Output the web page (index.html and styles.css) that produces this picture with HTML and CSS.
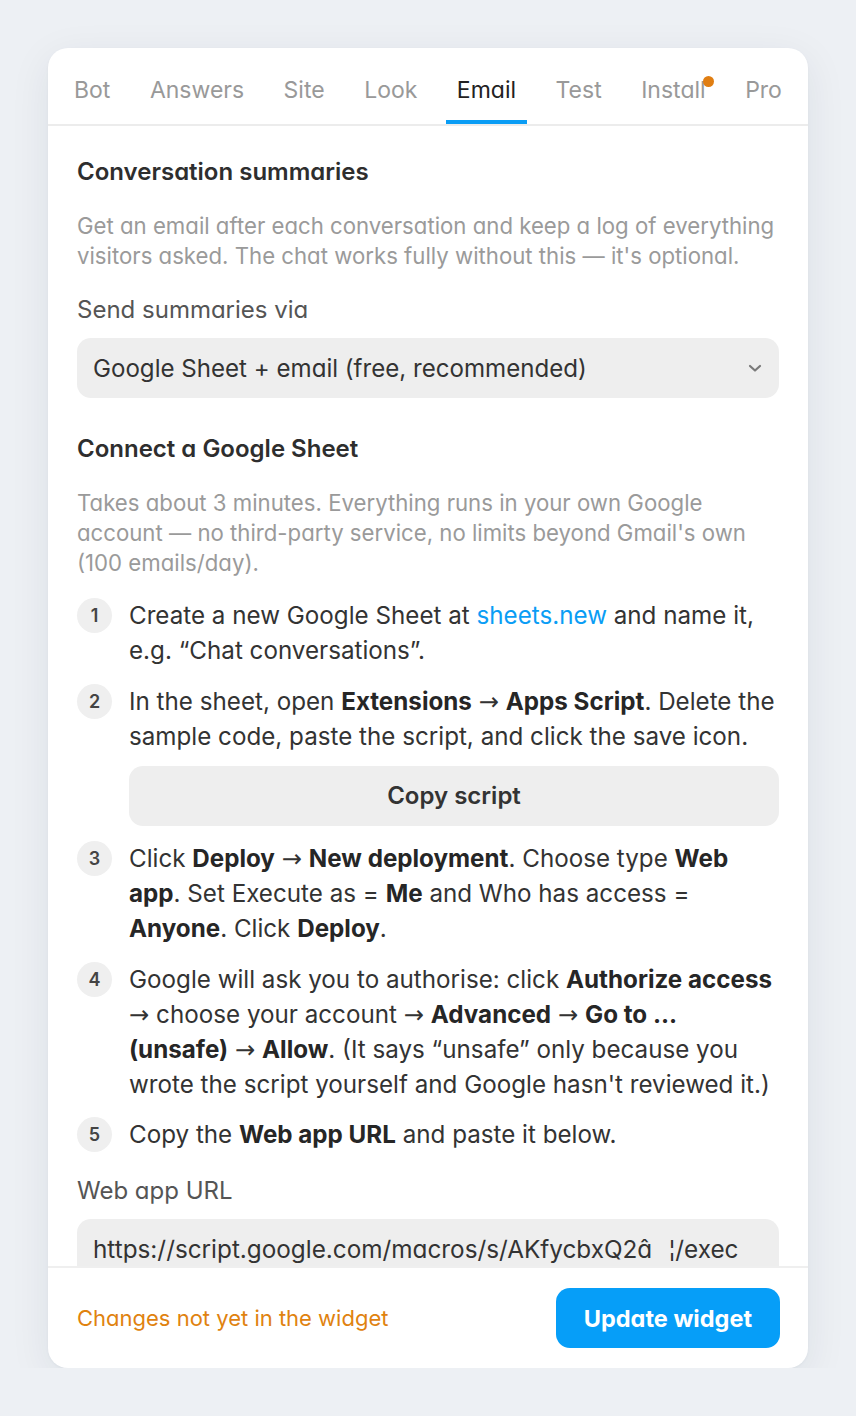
FILE: index.html
```html
<!DOCTYPE html>
<html lang="en">
<head>
<meta charset="utf-8">
<title>Email settings</title>
<link rel="stylesheet" href="styles.css">
</head>
<body>
<div class="card">
  <nav class="tabs">
    <span class="tab">Bot</span>
    <span class="tab">Answers</span>
    <span class="tab">Site</span>
    <span class="tab">Look</span>
    <span class="tab active">Email</span>
    <span class="tab">Test</span>
    <span class="tab"><span class="dotted">Install<span class="dot"></span></span></span>
    <span class="tab">Pro</span>
  </nav>
  <main class="content">
    <h2 class="heading">Conversation summaries</h2>
    <p class="desc">Get an email after each conversation and keep a log of everything visitors asked. The chat works fully without this — it's optional.</p>
    <label class="label">Send summaries via</label>
    <div class="select">
      <span>Google Sheet + email (free, recommended)</span>
      <svg class="chev" width="14" height="9" viewBox="0 0 14 9"><path d="M2 2l5 4.5L12 2" fill="none" stroke="#7a7a7a" stroke-width="2.2" stroke-linecap="round" stroke-linejoin="round"/></svg>
    </div>
    <h2 class="heading second">Connect a Google Sheet</h2>
    <p class="desc">Takes about 3 minutes. Everything runs in your own Google account — no third-party service, no limits beyond Gmail's own (100 emails/day).</p>
    <ol class="steps">
      <li class="step">
        <span class="num">1</span>
        <div class="step-body">Create a new Google Sheet at <a class="link">sheets.new</a> and name it, e.g. “Chat conversations”.</div>
      </li>
      <li class="step">
        <span class="num">2</span>
        <div class="step-body">In the sheet, open <b>Extensions</b> <span class="arr">→</span> <b>Apps Script</b>. Delete the sample code, paste the script, and click the save icon.
          <div class="btn-copy">Copy script</div>
        </div>
      </li>
      <li class="step">
        <span class="num">3</span>
        <div class="step-body">Click <b>Deploy</b> <span class="arr">→</span> <b>New deployment</b>. Choose type <b>Web app</b>. Set Execute as = <b>Me</b> and Who has access = <b>Anyone</b>. Click <b>Deploy</b>.</div>
      </li>
      <li class="step">
        <span class="num">4</span>
        <div class="step-body">Google will ask you to authorise: click <b>Authorize access</b> <span class="arr">→</span> choose your account <span class="arr">→</span> <b>Advanced</b> <span class="arr">→</span> <b>Go to ... (unsafe)</b> <span class="arr">→</span> <b>Allow</b>. (It says “unsafe” only because you wrote the script yourself and Google hasn't reviewed it.)</div>
      </li>
      <li class="step">
        <span class="num">5</span>
        <div class="step-body">Copy the <b>Web app URL</b> and paste it below.</div>
      </li>
    </ol>
    <label class="label url-label">Web app URL</label>
    <div class="input">https://script.google.com/macros/s/AKfycbxQ2â&ensp;&thinsp;¦/exec</div>
  </main>
  <footer class="footer">
    <span class="pending">Changes not yet in the widget</span>
    <span class="btn-primary">Update widget</span>
  </footer>
</div>
</body>
</html>
```
FILE: styles.css
```css
* { box-sizing: border-box; }
html, body { margin: 0; padding: 0; }
body {
  background: #edf0f4;
  font-family: Inter, "Noto Sans", sans-serif;
  font-feature-settings: "cv11";
  color: #333;
}
.card {
  width: 760px;
  height: 1320px;
  margin: 48px auto 0;
  background: #fff;
  border-radius: 20px;
  box-shadow: 0 10px 40px rgba(30, 40, 60, 0.08), 0 1px 3px rgba(30, 40, 60, 0.04);
  display: flex;
  flex-direction: column;
  overflow: hidden;
}
.tabs {
  display: flex;
  gap: 18.5px;
  padding: 0 16px 0 15.5px;
  height: 78px;
  border-bottom: 2px solid #ececec;
  flex-shrink: 0;
}
.tab {
  display: flex;
  align-items: center;
  padding: 12px 10.5px 0;
  font-size: 23px;
  color: #999;
  border-bottom: 4px solid transparent;
  white-space: nowrap;
}
.tab.active {
  color: #222;
  border-bottom-color: #0a9df5;
}
.dotted { position: relative; }
.dot {
  position: absolute;
  right: -8px;
  top: 0;
  width: 11px;
  height: 11px;
  border-radius: 50%;
  background: #e07e12;
}
.content {
  flex: 1;
  overflow: hidden;
  padding: 31px 29px 0;
}
.heading {
  margin: 0 0 24px;
  font-size: 24px;
  line-height: 30px;
  font-weight: 600;
  color: #2e2e2e;
}
.heading.second { margin-top: 36px; }
.desc {
  margin: 0;
  font-size: 22.2px;
  line-height: 30px;
  color: #9a9a9a;
}
.label {
  display: block;
  margin: 24px 0 13px;
  font-size: 24px;
  line-height: 30px;
  color: #555;
}
.select {
  display: flex;
  align-items: center;
  justify-content: space-between;
  height: 60px;
  padding: 0 17px 0 16px;
  background: #eeeeee;
  border-radius: 14px;
  font-size: 24.1px;
  color: #333;
}
.steps {
  list-style: none;
  margin: 20px 0 0;
  padding: 0;
  display: flex;
  flex-direction: column;
  gap: 15.5px;
}
.step {
  display: grid;
  grid-template-columns: 35px 1fr;
  column-gap: 17px;
  align-items: start;
}
.num {
  width: 35px;
  height: 35px;
  border-radius: 50%;
  background: #efefef;
  display: flex;
  align-items: center;
  justify-content: center;
  font-size: 18px;
  font-weight: 600;
  color: #444;
}
.step-body {
  font-size: 24.2px;
  line-height: 35px;
  color: #333;
  font-feature-settings: normal;
}
.step-body b { font-weight: 700; color: #262626; }
.arr {
  font-family: "DejaVu Sans", sans-serif;
  font-weight: 400;
  line-height: 0;
}
.link { color: #0a9df5; text-decoration: none; }
.btn-copy {
  margin: 12px 0 0;
  height: 60px;
  display: flex;
  align-items: center;
  justify-content: center;
  background: #eeeeee;
  border-radius: 14px;
  font-size: 24px;
  font-weight: 600;
  color: #333;
  font-feature-settings: "cv11";
}
.url-label { margin-top: 24px; }
.input {
  height: 60px;
  padding: 0 16px;
  display: flex;
  align-items: center;
  background: #eeeeee;
  border-radius: 14px;
  font-size: 24.3px;
  color: #333;
  white-space: pre;
}
.footer {
  flex-shrink: 0;
  height: 102px;
  border-top: 2px solid #efefef;
  display: flex;
  align-items: center;
  justify-content: space-between;
  padding: 0 28px 0 29px;
}
.pending {
  font-size: 22px;
  color: #e0820f;
}
.btn-primary {
  height: 60px;
  padding: 0 28px;
  display: flex;
  align-items: center;
  background: #069ef8;
  color: #fff;
  border-radius: 14px;
  font-size: 23.5px;
  font-weight: 700;
}
```
